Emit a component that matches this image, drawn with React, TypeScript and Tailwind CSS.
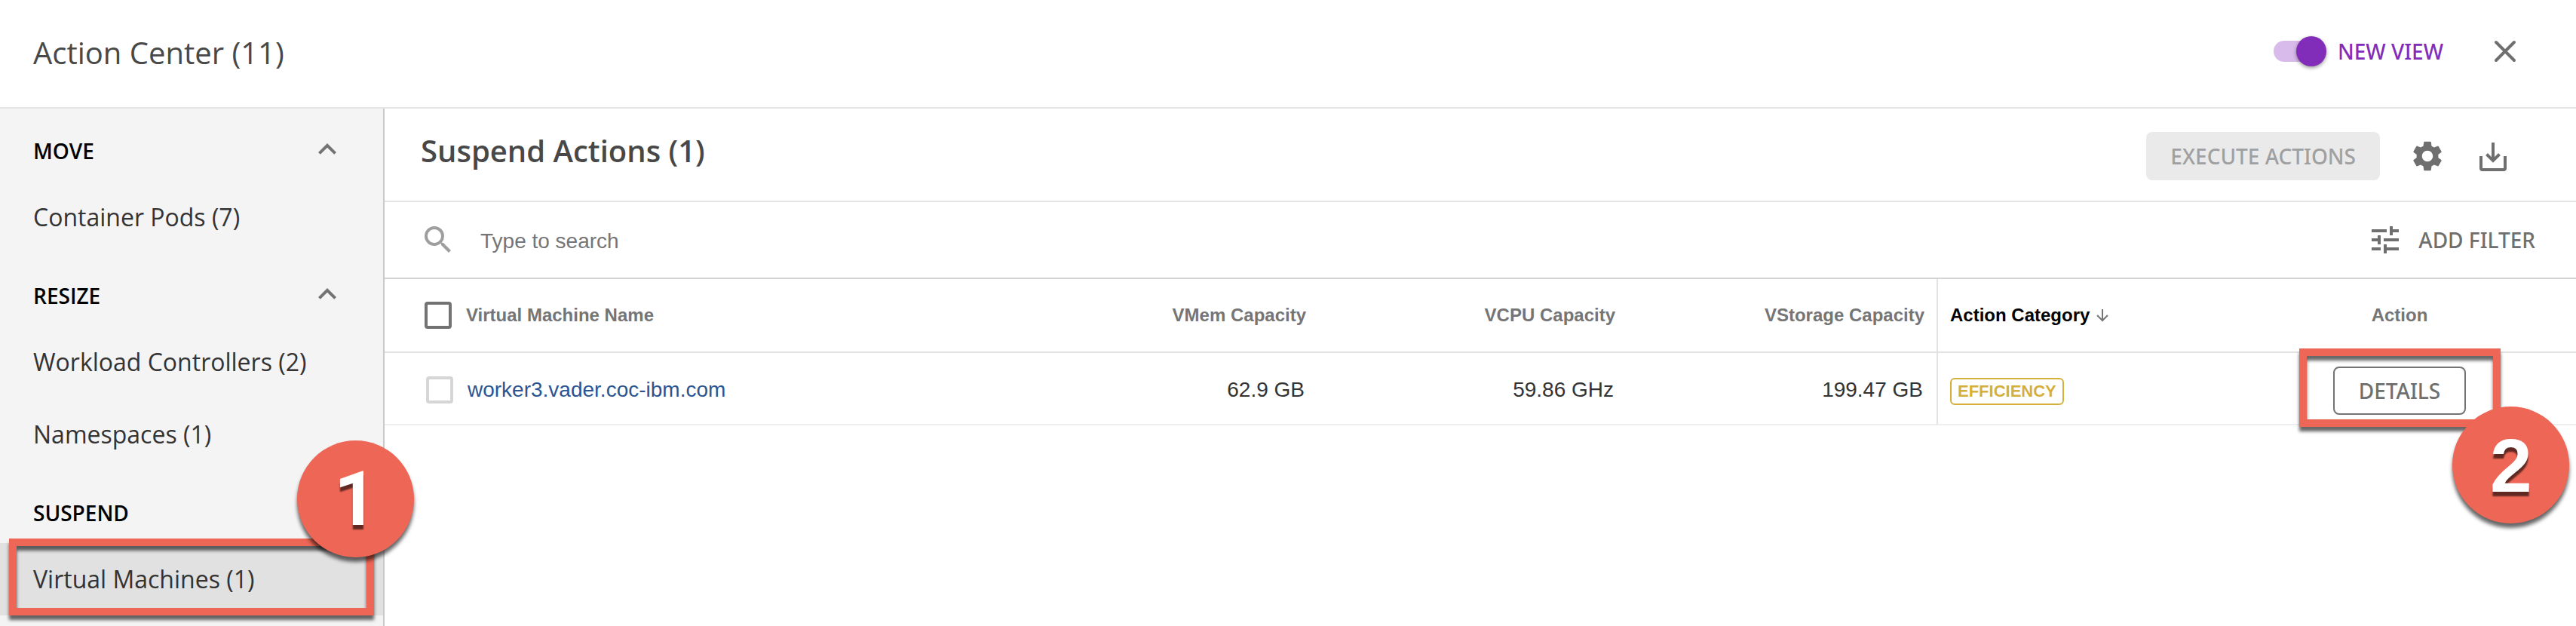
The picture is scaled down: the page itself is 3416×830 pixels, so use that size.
import { ReactNode } from "react";
import { MdExpandLess, MdSearch, MdSettings, MdTune } from "react-icons/md";

type Group = { title: string; collapsible: boolean; items: { label: string; active?: boolean }[] };

const groups: Group[] = [
  { title: "MOVE", collapsible: true, items: [{ label: "Container Pods (7)" }] },
  {
    title: "RESIZE",
    collapsible: true,
    items: [{ label: "Workload Controllers (2)" }, { label: "Namespaces (1)" }],
  },
  { title: "SUSPEND", collapsible: false, items: [{ label: "Virtual Machines (1)", active: true }] },
];

function Step({ className, children }: { className: string; children: ReactNode }) {
  return (
    <span
      className={
        "pointer-events-none absolute z-20 flex size-[155px] items-center justify-center rounded-full bg-[#ee6655] text-[100px] leading-none font-bold text-white shadow-[0_6px_5px_rgba(0,0,0,0.6)] [text-shadow:0_6px_2px_rgba(0,0,0,0.6)] " +
        className
      }
    >
      {children}
    </span>
  );
}

function Highlight({ className }: { className: string }) {
  return (
    <span
      className={
        "pointer-events-none absolute z-10 border-[10px] border-[#ee6655] drop-shadow-[0_6px_2px_rgba(0,0,0,0.6)] " +
        className
      }
    />
  );
}

function Sidebar() {
  return (
    <nav
      aria-label="Action types"
      className="w-[510px] shrink-0 border-r-2 border-[#c9c9c9] bg-[#f4f4f4]"
    >
      {groups.map((group) => (
        <section key={group.title}>
          <div className="flex h-24 items-center justify-between pt-4 pr-[50px] pl-11">
            <h2 className="text-[28px] leading-10 font-semibold text-black">{group.title}</h2>
            {group.collapsible && (
              <button type="button" aria-label={"Collapse " + group.title} className="-mt-1 text-[#737373]">
                <MdExpandLess size={48} />
              </button>
            )}
          </div>
          <ul>
            {group.items.map((item) => (
              <li key={item.label} className={item.active ? "relative bg-[#e1e1e1]" : ""}>
                <a href="#" className="flex h-24 items-center pl-11 text-[32px] leading-10 text-[#333]">
                  {item.label}
                </a>
                {item.active && (
                  <>
                    <Highlight className="-top-1.5 right-3 bottom-0 left-3" />
                    <Step className="-top-34 -right-[41px] font-['Roboto',sans-serif]">1</Step>
                  </>
                )}
              </li>
            ))}
          </ul>
        </section>
      ))}
    </nav>
  );
}

const headCell = "p-0 text-[24px] leading-8 font-bold text-[#757575]";
const valueCell = "pt-1 pr-[18px] text-right text-[28px] leading-8 text-[#333]";

function ActionTable() {
  return (
    <table className="w-full table-fixed border-separate border-spacing-0 font-['Liberation_Sans',sans-serif]">
      <colgroup>
        <col />
        <col className="w-[410px]" />
        <col className="w-[410px]" />
        <col className="w-[410px]" />
        <col className="w-[380px]" />
        <col className="w-[468px]" />
      </colgroup>
      <thead>
        <tr className="h-[98px] [&>th]:border-b-2 [&>th]:border-[#e2e2e2]">
          <th className={headCell + " text-left"}>
            <div className="flex items-center gap-[19px] pl-[53px]">
              <input
                type="checkbox"
                aria-label="Select all"
                className="size-9 appearance-none rounded-sm border-4 border-[#737373]"
              />
              Virtual Machine Name
            </div>
          </th>
          <th className={headCell + " pr-4! text-right"}>VMem Capacity</th>
          <th className={headCell + " pr-4! text-right"}>VCPU Capacity</th>
          <th className={headCell + " pr-4! text-right"}>VStorage Capacity</th>
          <th className="border-l-2 p-0 pl-4 text-left text-[24px] leading-8 font-bold text-black">
            <button type="button" className="flex items-center gap-2">
              Action Category
              <svg
                width="18"
                height="18"
                viewBox="0 0 18 18"
                fill="none"
                stroke="#757575"
                strokeWidth="2"
                aria-hidden="true"
              >
                <path d="M9 1v15M2 9l7 7 7-7" />
              </svg>
            </button>
          </th>
          <th className={headCell + " text-center"}>Action</th>
        </tr>
      </thead>
      <tbody>
        <tr className="h-24 [&>td]:border-b-2 [&>td]:border-b-[#efefef]">
          <td className="p-0">
            <div className="flex items-center gap-[19px] pt-1 pl-[55px]">
              <input
                type="checkbox"
                aria-label="Select worker3.vader.coc-ibm.com"
                className="size-9 appearance-none rounded-sm border-4 border-[#d6d6d6]"
              />
              <a href="#" className="text-[28px] leading-8 text-[#2b5592]">
                worker3.vader.coc-ibm.com
              </a>
            </div>
          </td>
          <td className={valueCell}>62.9 GB</td>
          <td className={valueCell}>59.86 GHz</td>
          <td className={valueCell}>199.47 GB</td>
          <td className="border-l-2 border-l-[#e2e2e2] p-0 pt-2 pl-4">
            <span className="flex h-9 w-fit items-center rounded-md border-2 border-[#d4b03a] px-2 text-[22px] leading-7 font-bold text-[#d4b03a]">
              EFFICIENCY
            </span>
          </td>
          <td className="p-0 pt-1.5 text-center">
            <div className="relative mx-auto w-fit font-['Noto_Sans',sans-serif]">
              <button
                type="button"
                className="flex h-16 items-center rounded-lg border-2 border-[#737373] px-8 text-[28px] leading-10 font-medium text-[#6f6f6f]"
              >
                DETAILS
              </button>
              <Highlight className="-top-6 -right-[46px] -bottom-4 -left-[45px]" />
              <Step className="top-[53px] -right-[137px] font-['Liberation_Sans',sans-serif]">2</Step>
            </div>
          </td>
        </tr>
      </tbody>
    </table>
  );
}

export default function App() {
  return (
    <div className="flex min-h-screen flex-col bg-white font-['Open_Sans',sans-serif]">
      <header className="flex h-36 items-center justify-between border-b-2 border-[#e4e4e4] pr-[76px] pb-1.5 pl-11">
        <h1 className="pt-1 text-[40px] leading-[56px] text-[#484848]">Action Center (11)</h1>
        <div className="flex items-center">
          <label className="flex items-center gap-[15px] font-['Noto_Sans',sans-serif] text-[28px] leading-10 font-medium text-[#822dba]">
            <span className="relative flex h-10 w-[70px] items-center">
              <input
                type="checkbox"
                defaultChecked
                className="h-7 w-[68px] appearance-none rounded-full bg-[#d8bbea]"
              />
              <span className="pointer-events-none absolute top-0 right-0 size-10 rounded-full bg-[#822dba] shadow-[0_2px_5px_rgba(0,0,0,0.4)]" />
            </span>
            NEW VIEW
          </label>
          <button type="button" aria-label="Close" className="ml-16">
            <svg
              width="36"
              height="36"
              viewBox="0 0 36 36"
              fill="none"
              stroke="#6f6f6f"
              strokeWidth="4"
              strokeLinecap="round"
            >
              <path d="M6 6l24 24M30 6L6 30" />
            </svg>
          </button>
        </div>
      </header>

      <div className="flex flex-1">
        <Sidebar />
        <main className="min-w-0 flex-1">
          <div className="flex h-[124px] items-center justify-between border-b-2 border-[#e4e4e4] pr-[86px] pl-12">
            <h2 className="pb-2.5 text-[40px] leading-[56px] font-semibold text-[#484848]">Suspend Actions (1)</h2>
            <div className="flex items-center gap-[39px] pt-1 text-[#6f6f6f]">
              <button
                type="button"
                disabled
                className="h-16 rounded-lg bg-[#eaeaea] px-8 font-['Noto_Sans',sans-serif] text-[28px] leading-10 font-medium text-[#a0a0a0]"
              >
                EXECUTE ACTIONS
              </button>
              <button type="button" aria-label="Settings">
                <MdSettings size={48} />
              </button>
              <button type="button" aria-label="Download">
                <svg
                  width="48"
                  height="48"
                  viewBox="0 0 48 48"
                  fill="none"
                  stroke="currentColor"
                  strokeWidth="4"
                >
                  <path d="M24 6v24M15.500 21.500L24 30l8.500-8.500M8 24v16a2 2 0 0 0 2 2h28a2 2 0 0 0 2-2V24" />
                </svg>
              </button>
            </div>
          </div>

          <div className="flex h-[102px] items-center justify-between border-b-2 border-[#d4d4d4] pr-[54px] pl-[47px]">
            <div className="flex flex-1 items-center gap-8">
              <MdSearch size={48} className="shrink-0 text-[#9e9e9e]" aria-hidden="true" />
              <input
                type="text"
                aria-label="Search"
                placeholder="Type to search"
                className="flex-1 pt-1 font-['Liberation_Sans',sans-serif] text-[28px] leading-10 text-[#333] outline-none placeholder:text-[#757575]"
              />
            </div>
            <button
              type="button"
              className="flex items-center gap-5 font-['Noto_Sans',sans-serif] text-[28px] leading-10 font-medium text-[#6f6f6f]"
            >
              <MdTune size={48} />
              ADD FILTER
            </button>
          </div>

          <ActionTable />
        </main>
      </div>
    </div>
  );
}
